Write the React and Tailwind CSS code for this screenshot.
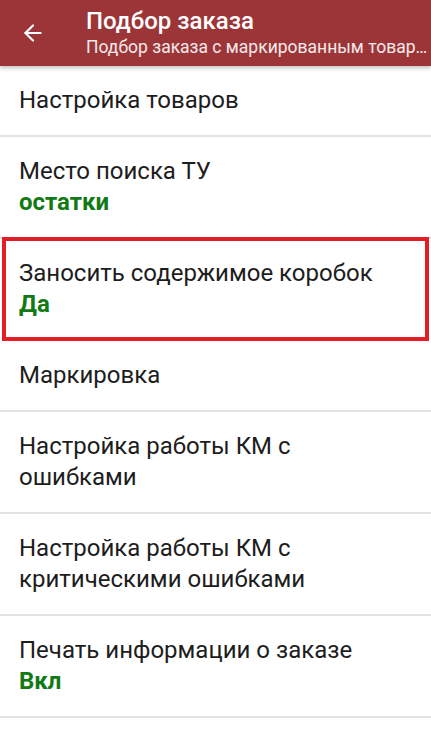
import { ArrowLeft } from "lucide-react";

const rows = [
  { title: "Место поиска ТУ", value: "остатки" },
];

function Row({ lines, value }) {
  return (
    <div className="border-b-2 border-[#e3e3e3] px-[19px] py-[19px]">
      {lines.map((l) => (
        <div key={l} className="text-[24px] leading-[31px] text-[#1d1d1d]">
          {l}
        </div>
      ))}
      {value && (
        <div className="text-[24px] leading-[31px] font-bold text-[#127a14]">
          {value}
        </div>
      )}
    </div>
  );
}

export default function App() {
  return (
    <div
      className="w-[431px] h-[738px] bg-white overflow-hidden"
      style={{ fontFamily: "Roboto, 'Noto Sans', sans-serif" }}
    >
      {/* шапка */}
      <div className="relative z-10 h-[66px] bg-[#9c3538] flex items-center shadow-[0_2px_4px_rgba(0,0,0,0.25)]">
        <div className="w-[86px] flex justify-center pr-[20px]">
          <ArrowLeft className="w-[26px] h-[26px] text-white" strokeWidth={2} />
        </div>
        <div className="flex-1 min-w-0 -mt-[2px]">
          <div className="text-[24px] leading-[29px] font-medium text-white">
            Подбор заказа
          </div>
          <div className="text-[17.5px] leading-[22px] text-white/90 whitespace-nowrap">
            Подбор заказа с маркированным товар…
          </div>
        </div>
      </div>

      <Row lines={["Настройка товаров"]} />
      {rows.map((r) => (
        <Row key={r.title} lines={[r.title]} value={r.value} />
      ))}

      {/* выделенный пункт */}
      <div className="relative -mt-[2px] mx-[2px] border-[4px] border-[#e31e26] pl-[13px] pt-[17px] pb-[17px]">
        <div className="text-[24px] leading-[31px] text-[#1d1d1d]">
          Заносить содержимое коробок
        </div>
        <div className="text-[24px] leading-[31px] font-bold text-[#127a14]">
          Да
        </div>
      </div>

      <Row lines={["Маркировка"]} />
      <Row lines={["Настройка работы КМ с", "ошибками"]} />
      <Row lines={["Настройка работы КМ с", "критическими ошибками"]} />
      <Row lines={["Печать информации о заказе"]} value="Вкл" />
    </div>
  );
}
